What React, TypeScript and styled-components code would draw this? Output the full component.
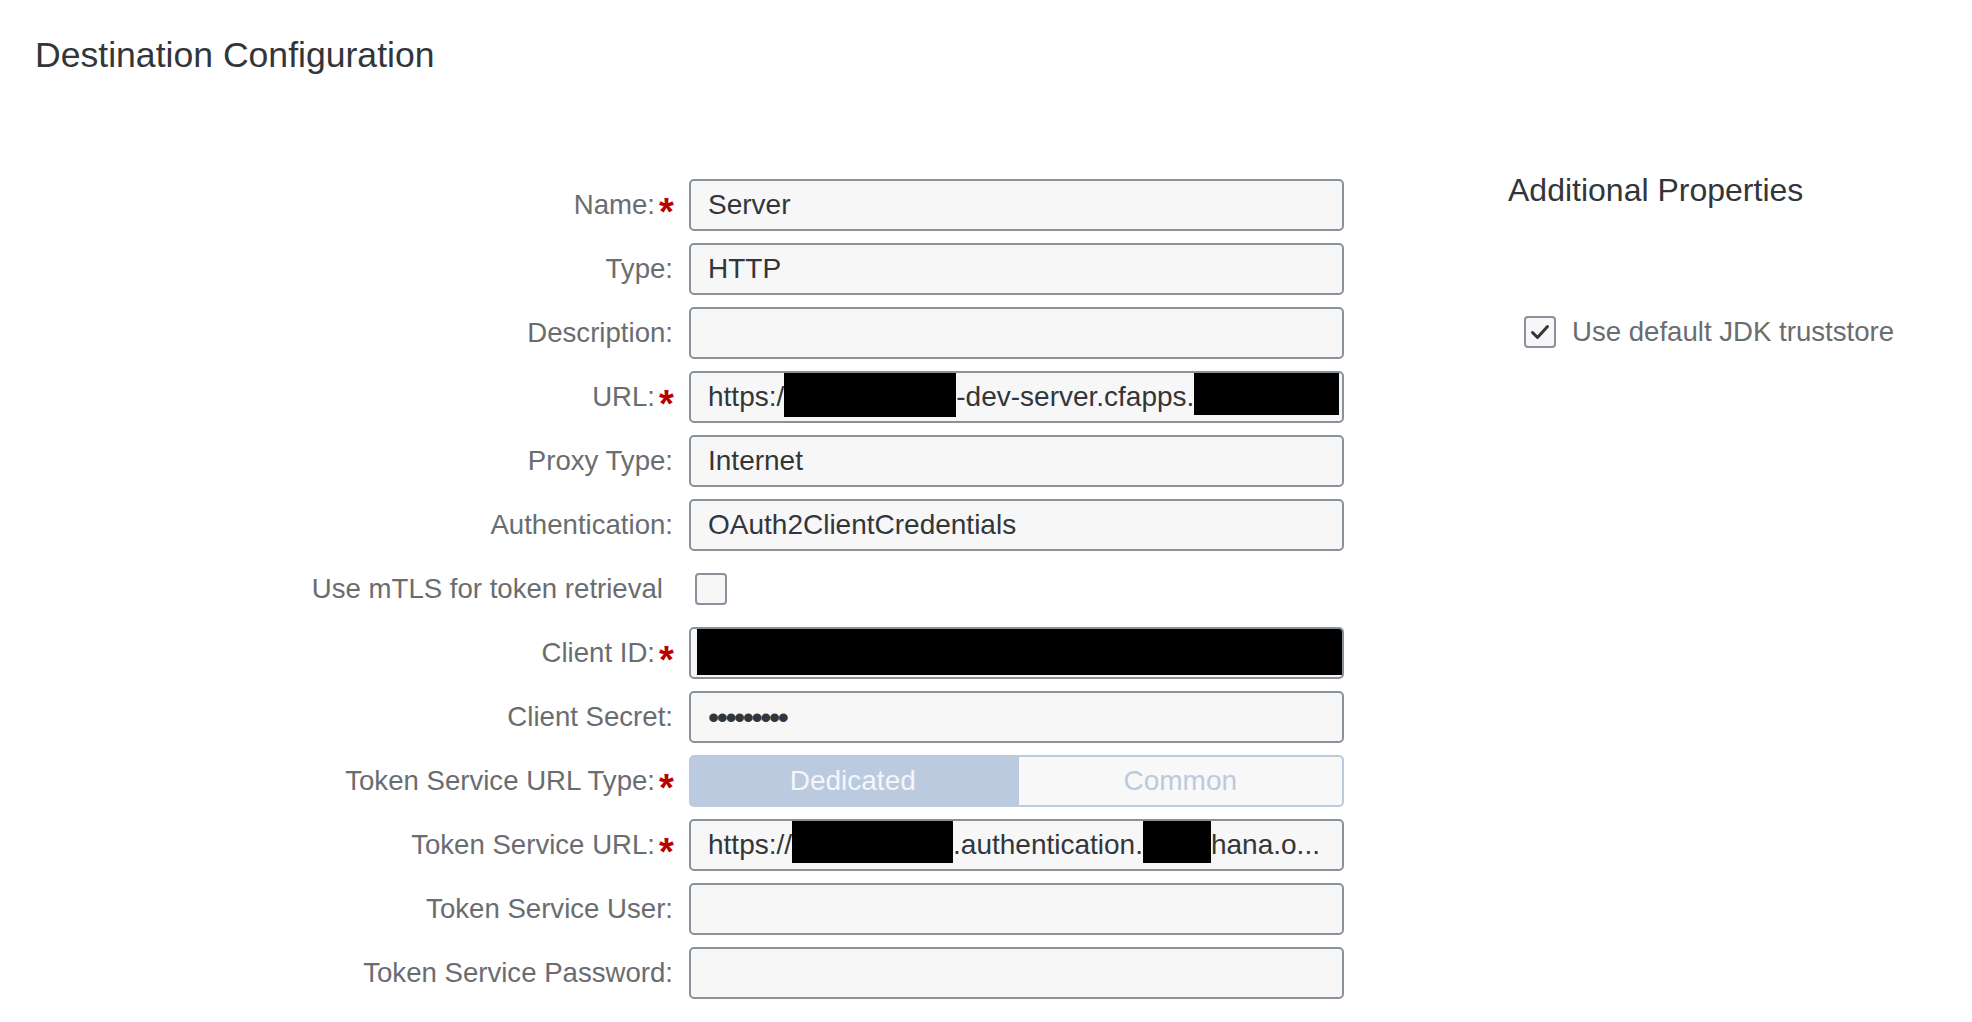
import * as React from 'react'
import styled, { createGlobalStyle } from 'styled-components'

const GlobalStyle = createGlobalStyle`
  html, body {
    margin: 0;
    padding: 0;
    background: #ffffff;
  }
  body {
    font-family: 'Liberation Sans', Arial, sans-serif;
  }
`

const Page = styled.div`
  padding: 33px 35px;
  color: #32363a;
`

const Title = styled.h1`
  margin: 0;
  font-size: 35.6px;
  line-height: 44px;
  font-weight: 400;
  color: #32363a;
`

const Body = styled.div`
  display: flex;
  align-items: flex-start;
  margin-top: 102px;
`

const FormGrid = styled.div`
  display: grid;
  grid-template-columns: 638px 655px;
  column-gap: 16px;
  row-gap: 12px;
  grid-auto-rows: 52px;
`

const Label = styled.div<{ $pad?: number }>`
  display: flex;
  align-items: center;
  justify-content: flex-end;
  font-size: 27.6px;
  color: #6a6d70;
  white-space: nowrap;
  padding-right: ${({ $pad }) => $pad || 0}px;
`

const Required = styled.span`
  display: inline-block;
  width: 14px;
  margin-left: 4px;
  color: #bb0000;
  font-weight: 700;
  font-size: 38px;
  line-height: 1;
  transform: translateY(7px);
`

const Input = styled.div`
  box-sizing: border-box;
  display: flex;
  align-items: center;
  height: 52px;
  padding: 0 17px;
  background: #f7f7f7;
  border: 2px solid #89919a;
  border-radius: 5px;
  font-size: 28px;
  color: #32363a;
  white-space: nowrap;
  overflow: hidden;
`

const RedactedInput = styled(Input)`
  padding: 0 0 0 6px;
`

const Redact = styled.span<{ $w?: number; $top?: number; $h?: number; $mr?: number }>`
  display: block;
  flex: ${({ $w }) => ($w ? `0 0 ${$w}px` : '1 1 auto')};
  align-self: flex-start;
  height: ${({ $h }) => $h ?? 46}px;
  margin-top: ${({ $top }) => $top ?? 0}px;
  margin-right: ${({ $mr }) => $mr ?? 0}px;
  background: #000;
`

const Dots = styled.span`
  font-size: 32px;
  letter-spacing: -2.5px;
`

const CheckCell = styled.div`
  display: flex;
  align-items: center;
  padding-left: 6px;
`

const Box = styled.span`
  box-sizing: border-box;
  display: inline-flex;
  align-items: center;
  justify-content: center;
  width: 32px;
  height: 32px;
  background: #f7f7f7;
  border: 2px solid #89919a;
  border-radius: 4px;
`

const Segmented = styled.div`
  display: grid;
  grid-template-columns: 1fr 1fr;
  height: 52px;
`

const Segment = styled.div<{ $active?: boolean }>`
  box-sizing: border-box;
  display: flex;
  align-items: center;
  justify-content: center;
  font-size: 28px;
  border: 2px solid #bccadf;
  background: ${({ $active }) => ($active ? '#bccadf' : '#f8f8f8')};
  color: ${({ $active }) => ($active ? '#f4f6f9' : '#bccadf')};
  border-radius: ${({ $active }) => ($active ? '5px 0 0 5px' : '0 5px 5px 0')};
`

const Side = styled.div`
  display: flex;
  flex-direction: column;
  margin-left: 164px;
  margin-top: -9px;
`

const SideTitle = styled.h2`
  margin: 0;
  font-size: 32px;
  line-height: 40px;
  font-weight: 400;
  color: #32363a;
`

const CheckRow = styled.label`
  display: flex;
  align-items: center;
  gap: 16px;
  height: 52px;
  margin-top: 96px;
  padding-left: 16px;
  font-size: 27.6px;
  color: #6a6d70;
`

function Check({ checked }: { checked?: boolean }) {
  return (
    <Box>
      {checked && (
        <svg width="22" height="22" viewBox="0 0 22 22">
          <path d="M3.5 11.5l5 5 10-11" fill="none" stroke="#32363a" strokeWidth="3" strokeLinecap="round" strokeLinejoin="round" />
        </svg>
      )}
    </Box>
  )
}

function FieldLabel({ text, required }: { text: string; required?: boolean }) {
  return (
    <Label>
      {text}
      {required && <Required>*</Required>}
    </Label>
  )
}

export default function App() {
  return (
    <Page>
      <GlobalStyle />
      <Title>Destination Configuration</Title>
      <Body>
        <FormGrid>
          <FieldLabel text="Name:" required />
          <Input>Server</Input>

          <FieldLabel text="Type:" />
          <Input>HTTP</Input>

          <FieldLabel text="Description:" />
          <Input />

          <FieldLabel text="URL:" required />
          <Input>
            https:/
            <Redact $w={172} $top={-2} />
            -dev-server.cfapps.
            <Redact $top={-4} $mr={-14} />
          </Input>

          <FieldLabel text="Proxy Type:" />
          <Input>Internet</Input>

          <FieldLabel text="Authentication:" />
          <Input>OAuth2ClientCredentials</Input>

          <Label $pad={10}>Use mTLS for token retrieval</Label>
          <CheckCell>
            <Check />
          </CheckCell>

          <FieldLabel text="Client ID:" required />
          <RedactedInput>
            <Redact $top={-2} $h={48} />
          </RedactedInput>

          <FieldLabel text="Client Secret:" />
          <Input>
            <Dots>•••••••••</Dots>
          </Input>

          <FieldLabel text="Token Service URL Type:" required />
          <Segmented>
            <Segment $active>Dedicated</Segment>
            <Segment>Common</Segment>
          </Segmented>

          <FieldLabel text="Token Service URL:" required />
          <Input>
            https://
            <Redact $w={161} $top={-4} />
            .authentication.
            <Redact $w={68} $top={-4} />
            hana.o...
          </Input>

          <FieldLabel text="Token Service User:" />
          <Input />

          <FieldLabel text="Token Service Password:" />
          <Input />
        </FormGrid>

        <Side>
          <SideTitle>Additional Properties</SideTitle>
          <CheckRow>
            <Check checked />
            Use default JDK truststore
          </CheckRow>
        </Side>
      </Body>
    </Page>
  )
}
